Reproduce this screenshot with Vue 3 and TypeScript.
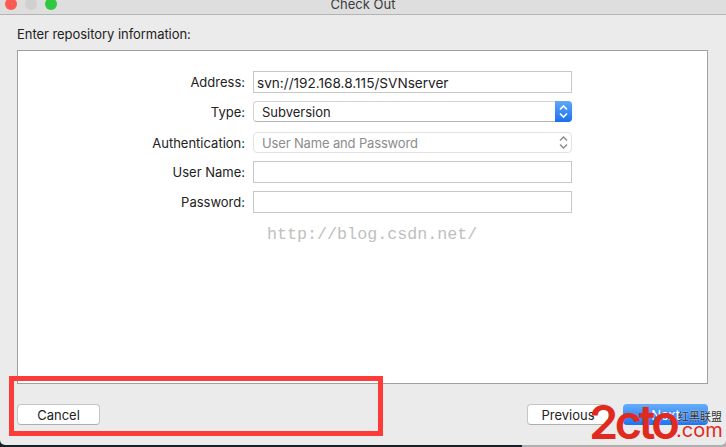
<script setup lang="ts">
const rows = [
  { label: 'User Name:' },
  { label: 'Password:' },
]
</script>

<template>
  <div class="desktop">
    <div class="window">
      <header class="titlebar">
        <div class="lights">
          <span class="light red"></span>
          <span class="light grey"></span>
          <span class="light green"></span>
        </div>
        <span class="title">Check Out</span>
      </header>

      <main class="content">
        <p class="heading">Enter repository information:</p>

        <section class="panel">
          <div class="form">
            <div class="row">
              <label>Address:</label>
              <div class="field">svn://192.168.8.115/SVNserver</div>
            </div>
            <div class="row short">
              <label>Type:</label>
              <div class="popup">
                <span>Subversion</span>
                <span class="stepper">
                  <svg viewBox="0 0 17 21" width="17" height="21" fill="none" stroke="#fff" stroke-width="1.6">
                    <path d="M5 8.5l3.5-3.5 3.5 3.5M5 12.5l3.5 3.5 3.5-3.5" />
                  </svg>
                </span>
              </div>
            </div>
            <div class="row short auth">
              <label>Authentication:</label>
              <div class="popup disabled">
                <span>User Name and Password</span>
                <span class="stepper">
                  <svg viewBox="0 0 17 21" width="17" height="21" fill="none" stroke="#8a8a8a" stroke-width="1.4">
                    <path d="M5 8.5l3.5-3.5 3.5 3.5M5 12.5l3.5 3.5 3.5-3.5" />
                  </svg>
                </span>
              </div>
            </div>
            <div v-for="row in rows" :key="row.label" class="row">
              <label>{{ row.label }}</label>
              <div class="field"></div>
            </div>
          </div>
          <div class="watermark">http://blog.csdn.net/</div>
        </section>

        <footer class="actions">
          <button class="btn">Cancel</button>
          <div class="nav">
            <button class="btn prev">Previous</button>
            <button class="btn primary">Next</button>
          </div>
        </footer>
      </main>
    </div>

    <div class="annotation"></div>
    <div class="logo">
      <span class="logo-main">2cto</span>
      <span class="logo-com">.com</span>
      <span class="logo-cn">红黑联盟</span>
    </div>
  </div>
</template>

<style>
html,
body {
  margin: 0;
  overflow: hidden;
}
</style>

<style scoped>
.desktop {
  position: relative;
  width: 726px;
  height: 447px;
  background: linear-gradient(to right, #1a2028 522px, #b0b0b0 522px);
  overflow: hidden;
  font-family: Inter, "Liberation Sans", Arial, sans-serif;
}

.window {
  width: 726px;
  height: 445px;
  display: flex;
  flex-direction: column;
  background: #ebebeb;
  border-radius: 0 0 5px 5px;
  overflow: hidden;
}

.titlebar {
  height: 14px;
  flex-shrink: 0;
  position: relative;
  background: #dedede;
  border-bottom: 1px solid #b4b4b4;
  display: flex;
  justify-content: center;
  align-items: flex-end;
}

.lights {
  position: absolute;
  left: 5px;
  top: -2px;
  display: flex;
  gap: 8px;
}

.light {
  width: 12px;
  height: 12px;
  border-radius: 50%;
}

.red { background: #fb5b55; }
.grey { background: #d0d0d0; }
.green { background: #2fc840; }

.title {
  font-size: 13px;
  line-height: 15px;
  color: #3c3c3c;
  margin-bottom: 2px;
}

.content {
  flex: 1;
  display: flex;
  flex-direction: column;
  padding: 0 18px 0 17px;
  min-height: 0;
}

.heading {
  margin: 11px 0 8px;
  font-size: 13px;
  line-height: 16px;
  letter-spacing: -0.05px;
  color: #222;
}

.panel {
  height: 334px;
  box-sizing: border-box;
  background: #fff;
  border: 1px solid #a0a0a0;
  position: relative;
}

.form {
  display: flex;
  flex-direction: column;
  padding: 12px 0 0;
}

.row {
  display: flex;
  align-items: center;
  height: 22px;
  margin-top: 8px;
}

.row.short {
  height: 21px;
}

.row.auth {
  margin-top: 10px;
}

.row label {
  width: 227px;
  text-align: right;
  font-size: 13px;
  color: #222;
  margin-right: 8px;
}

.field {
  width: 319px;
  height: 22px;
  box-sizing: border-box;
  background: #fff;
  border: 1px solid #c8c8c8;
  font-size: 13.6px;
  line-height: 22px;
  padding-left: 3px;
  color: #222;
}

.popup {
  width: 319px;
  height: 21px;
  box-sizing: border-box;
  display: flex;
  align-items: center;
  background: #fff;
  border: 1px solid #d2d2d2;
  border-bottom-color: #b4b4b4;
  border-radius: 4px;
  padding-left: 8px;
  font-size: 13px;
  color: #222;
  position: relative;
}

.stepper {
  position: absolute;
  right: -1px;
  top: -1px;
  width: 17px;
  height: 21px;
  border-radius: 0 4px 4px 0;
  background: linear-gradient(#5fa8f8, #1b6ff0);
  display: flex;
}

.popup.disabled {
  border-color: #e2e2e2;
  color: #8c8c8c;
  letter-spacing: -0.15px;
}

.popup.disabled .stepper {
  background: none;
}

.watermark {
  position: absolute;
  left: 249px;
  top: 172px;
  font-family: "Liberation Mono", "Courier New", monospace;
  font-size: 16.7px;
  line-height: 24px;
  color: #c0c0c0;
}

.actions {
  flex: 1;
  display: flex;
  align-items: flex-end;
  justify-content: space-between;
  padding-bottom: 20px;
}

.nav {
  display: flex;
  gap: 14px;
}

.btn {
  width: 83px;
  height: 21px;
  padding: 0;
  font-family: inherit;
  font-size: 13px;
  color: #222;
  background: #fff;
  border: 1px solid #c6c6c6;
  border-bottom-color: #aeaeae;
  border-radius: 4px;
}

.prev {
  width: 82px;
}

.primary {
  width: 85px;
  background: linear-gradient(#64aefa, #1e74f2);
  border: none;
  color: #fff;
}

.annotation {
  position: absolute;
  left: 9px;
  top: 376px;
  width: 364px;
  height: 50px;
  border: 5px solid #fd3c3a;
}

.logo {
  position: absolute;
  left: 588px;
  top: 398px;
  width: 138px;
  height: 46px;
  color: #e02a20;
}

.logo-main {
  position: absolute;
  left: 1px;
  top: -1px;
  font-size: 47px;
  line-height: 50px;
  font-weight: 600;
  letter-spacing: -3.5px;
}

.logo-com {
  position: absolute;
  left: 88px;
  top: 21px;
  font-size: 20px;
  line-height: 22px;
}

.logo-cn {
  position: absolute;
  left: 90px;
  top: 11px;
  font-family: "Noto Sans CJK SC", sans-serif;
  font-size: 11px;
  line-height: 14px;
  color: #333;
  text-shadow: 0 0 2px #fff;
}
</style>
